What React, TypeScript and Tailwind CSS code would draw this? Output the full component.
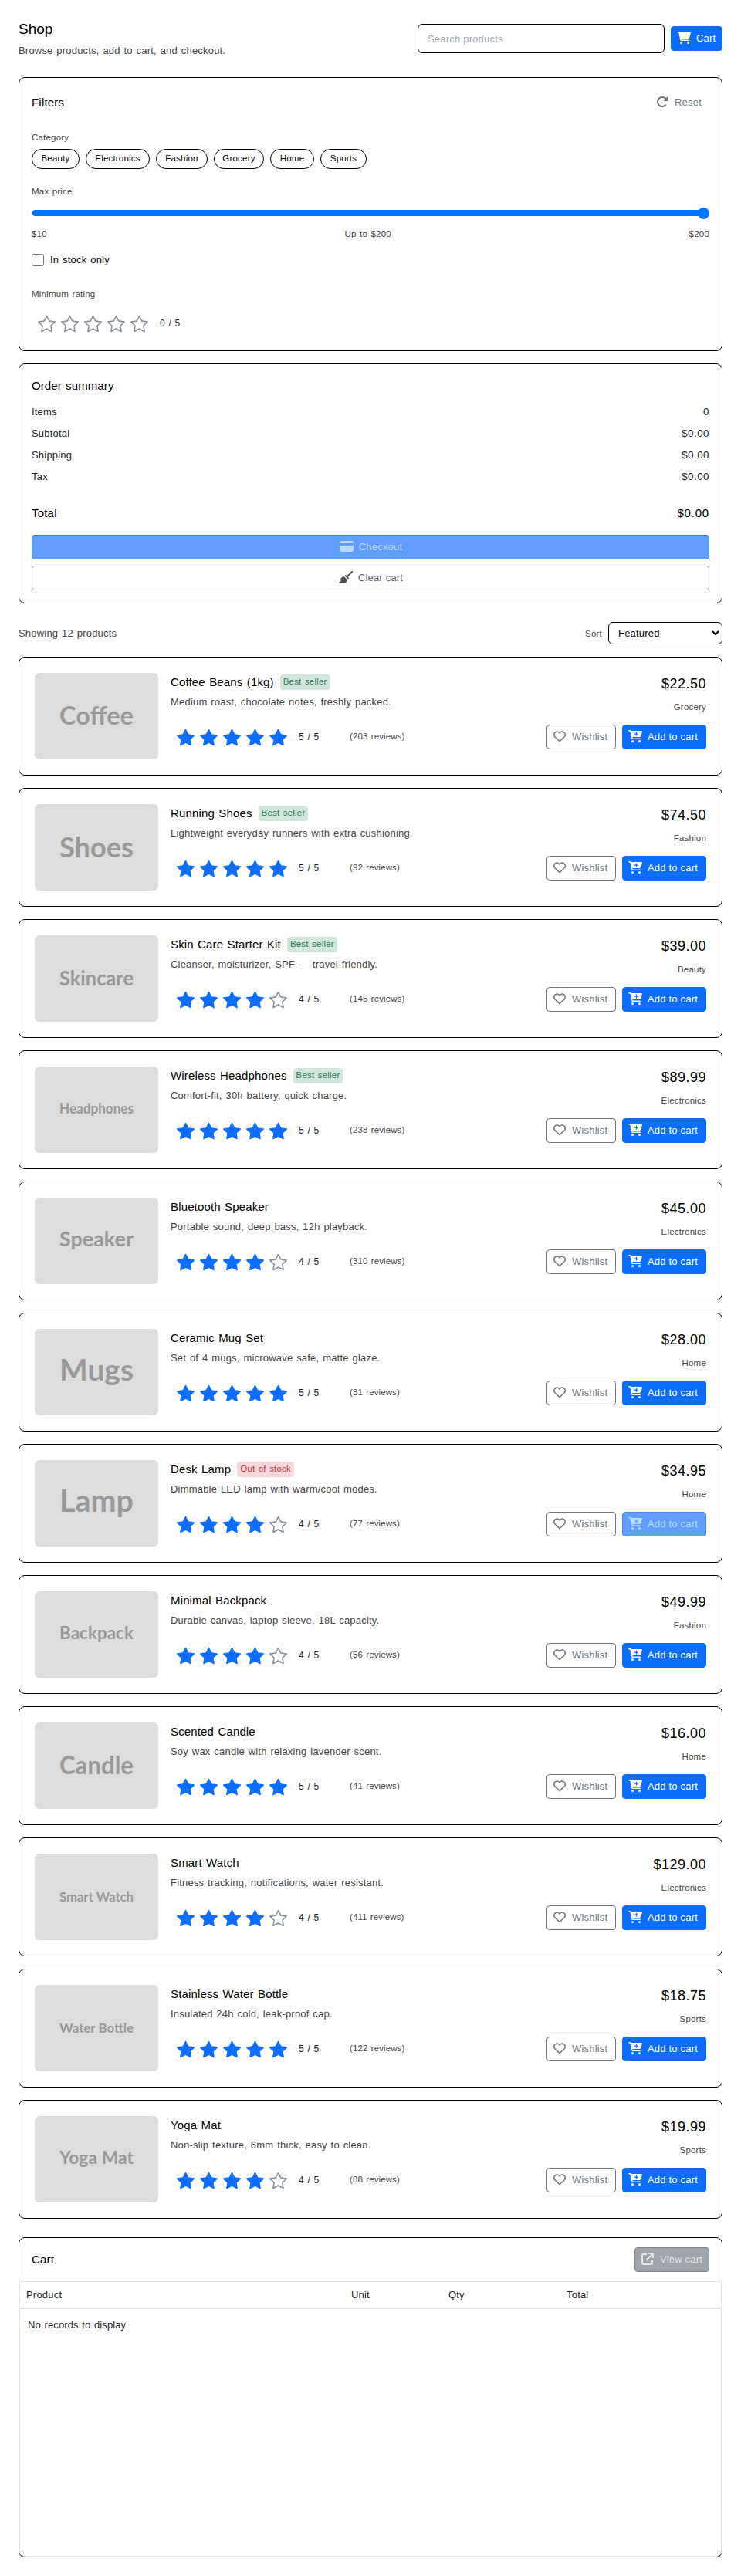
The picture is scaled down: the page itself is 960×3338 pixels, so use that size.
import React from "react";
import { clsx } from "clsx";
import { BsStar, BsStarFill } from "react-icons/bs";
import {
  FaArrowUpRightFromSquare,
  FaBroom,
  FaCartPlus,
  FaCartShopping,
  FaCreditCard,
  FaRegHeart,
  FaRotateRight,
} from "react-icons/fa6";

interface Product {
  name: string;
  description: string;
  image: string;
  imageSize: number;
  rating: number;
  reviews: number;
  price: string;
  category: string;
  bestSeller?: boolean;
  outOfStock?: boolean;
}

const categories = [
  { name: "Beauty", width: "w-[62px]" },
  { name: "Electronics", width: "w-[83px]" },
  { name: "Fashion", width: "w-[67px]" },
  { name: "Grocery", width: "w-[65px]" },
  { name: "Home", width: "w-[57px]" },
  { name: "Sports", width: "w-[60px]" },
];

const products: Product[] = [
  { name: "Coffee Beans (1kg)", description: "Medium roast, chocolate notes, freshly packed.", image: "Coffee", imageSize: 32, rating: 5, reviews: 203, price: "$22.50", category: "Grocery", bestSeller: true },
  { name: "Running Shoes", description: "Lightweight everyday runners with extra cushioning.", image: "Shoes", imageSize: 37, rating: 5, reviews: 92, price: "$74.50", category: "Fashion", bestSeller: true },
  { name: "Skin Care Starter Kit", description: "Cleanser, moisturizer, SPF — travel friendly.", image: "Skincare", imageSize: 26, rating: 4, reviews: 145, price: "$39.00", category: "Beauty", bestSeller: true },
  { name: "Wireless Headphones", description: "Comfort-fit, 30h battery, quick charge.", image: "Headphones", imageSize: 18, rating: 5, reviews: 238, price: "$89.99", category: "Electronics", bestSeller: true },
  { name: "Bluetooth Speaker", description: "Portable sound, deep bass, 12h playback.", image: "Speaker", imageSize: 27.5, rating: 4, reviews: 310, price: "$45.00", category: "Electronics" },
  { name: "Ceramic Mug Set", description: "Set of 4 mugs, microwave safe, matte glaze.", image: "Mugs", imageSize: 39, rating: 5, reviews: 31, price: "$28.00", category: "Home" },
  { name: "Desk Lamp", description: "Dimmable LED lamp with warm/cool modes.", image: "Lamp", imageSize: 40, rating: 4, reviews: 77, price: "$34.95", category: "Home", outOfStock: true },
  { name: "Minimal Backpack", description: "Durable canvas, laptop sleeve, 18L capacity.", image: "Backpack", imageSize: 23, rating: 4, reviews: 56, price: "$49.99", category: "Fashion" },
  { name: "Scented Candle", description: "Soy wax candle with relaxing lavender scent.", image: "Candle", imageSize: 32, rating: 5, reviews: 41, price: "$16.00", category: "Home" },
  { name: "Smart Watch", description: "Fitness tracking, notifications, water resistant.", image: "Smart Watch", imageSize: 17, rating: 4, reviews: 411, price: "$129.00", category: "Electronics" },
  { name: "Stainless Water Bottle", description: "Insulated 24h cold, leak-proof cap.", image: "Water Bottle", imageSize: 17, rating: 5, reviews: 122, price: "$18.75", category: "Sports" },
  { name: "Yoga Mat", description: "Non-slip texture, 6mm thick, easy to clean.", image: "Yoga Mat", imageSize: 23.5, rating: 4, reviews: 88, price: "$19.99", category: "Sports" },
];

const totals = [
  ["Items", "0"],
  ["Subtotal", "$0.00"],
  ["Shipping", "$0.00"],
  ["Tax", "$0.00"],
];

interface ButtonProps {
  icon: React.ReactNode;
  className: string;
  disabled?: boolean;
  children: React.ReactNode;
}

function Button({ icon, className, disabled, children }: ButtonProps) {
  return (
    <button
      type="button"
      disabled={disabled}
      className={clsx("flex h-8 shrink-0 items-center gap-[6px] rounded border px-[6px] whitespace-nowrap", className)}
    >
      <span className="mb-[2px] flex w-5 justify-center">{icon}</span>
      {children}
    </button>
  );
}

function Rating({ value }: { value: number }) {
  return (
    <div className="flex h-6 items-center pl-2">
      <div className="flex gap-[7px]">
        {[1, 2, 3, 4, 5].map((n) =>
          n <= value ? (
            <BsStarFill key={n} size={23} className="text-[#0d6efd]" />
          ) : (
            <BsStar key={n} size={23} className="text-[#868e96]" />
          )
        )}
      </div>
      <span className="ml-[15px] text-xs text-[#212529]">{value} / 5</span>
    </div>
  );
}

function Label({ className, children }: { className?: string; children: React.ReactNode }) {
  return <div className={clsx("h-[18px] text-[11.5px] leading-[18px] text-[#444]", className)}>{children}</div>;
}

function Thumbnail({ text, size }: { text: string; size: number }) {
  // words with a descender sit higher so the ink stays centred
  const shift = /[gpy]/.test(text) ? 0.27 : 0.35;

  return (
    <svg width="160" height="112" className="shrink-0 rounded-md bg-[#ddd]">
      <text
        x="80"
        y={56 + size * shift}
        textAnchor="middle"
        textLength="96"
        lengthAdjust="spacingAndGlyphs"
        fontSize={size}
        className="fill-[#999] font-['Lato',sans-serif] font-bold tracking-normal [word-spacing:0]"
      >
        {text}
      </text>
    </svg>
  );
}

function ProductCard({ product }: { product: Product }) {
  return (
    <article className="flex h-[154px] gap-4 rounded-lg border border-black p-5">
      <Thumbnail text={product.image} size={product.imageSize} />
      <div className="grow">
        <div className="mt-[2px] flex h-5 items-center gap-2">
          <h3 className="text-[15px] tracking-[0.15px] text-black">{product.name}</h3>
          {product.bestSeller && (
            <span className="h-5 rounded-sm bg-[#d1e7dd] px-1 text-[11.5px] leading-[18px] text-[#2c7a54]">Best seller</span>
          )}
          {product.outOfStock && (
            <span className="h-5 rounded-sm bg-[#f8d7da] px-1 text-[11.5px] leading-[18px] text-[#b93a48]">Out of stock</span>
          )}
        </div>
        <p className="mt-[6px] h-5 leading-5 text-[#444]">{product.description}</p>
        <div className="mt-[23px] flex items-center">
          <div className="w-[232px]">
            <Rating value={product.rating} />
          </div>
          <span className="text-[11.5px] tracking-[0.1px] text-[#444]">({product.reviews} reviews)</span>
        </div>
      </div>
      <div className="flex flex-col items-end">
        <div className="h-7 text-[18px] leading-7 tracking-[0.5px] text-black">{product.price}</div>
        <Label className="mt-[7px]">{product.category}</Label>
        <div className="mt-[14px] flex gap-2">
          <Button icon={<FaRegHeart size={16} />} className="w-[90px] border-[#6c757d] text-[#6c757d]">
            Wishlist
          </Button>
          <Button
            icon={<FaCartPlus size={18} />}
            disabled={product.outOfStock}
            className={clsx(
              "w-[109px]",
              product.outOfStock ? "border-[#3f88f0] bg-[#609eff] text-[#bcd8ff]" : "border-[#0d6efd] bg-[#0d6efd] text-white"
            )}
          >
            Add to cart
          </Button>
        </div>
      </div>
    </article>
  );
}

export default function App() {
  return (
    <div className="min-h-[3338px] bg-white p-6 font-['Liberation_Sans',Arial,sans-serif] text-[13px] tracking-[0.2px] text-[#212529] [word-spacing:1px]">
      {/* Page header */}
      <header className="flex h-[52px] items-center justify-between">
        <div className="h-full">
          <h1 className="h-7 text-[19px] leading-7 tracking-normal text-black">Shop</h1>
          <p className="mt-1 h-5 leading-5 text-[#444]">Browse products, add to cart, and checkout.</p>
        </div>
        <div className="flex items-center gap-2">
          <input
            placeholder="Search products"
            className="h-[38px] w-80 rounded-md border border-black px-3 placeholder:text-[#a3a9b0]"
          />
          <Button icon={<FaCartShopping size={18} />} className="w-[67px] border-[#0d6efd] bg-[#0d6efd] text-white">
            Cart
          </Button>
        </div>
      </header>

      {/* Filters */}
      <section className="mt-6 h-[355px] rounded-lg border border-black p-4">
        <div className="flex h-8 items-center justify-between">
          <h2 className="text-[15px] text-black">Filters</h2>
          <Button icon={<FaRotateRight size={16} />} className="w-[78px] border-transparent text-[#6c757d]">
            Reset
          </Button>
        </div>

        <Label className="mt-5">Category</Label>
        <div className="mt-[6px] flex gap-2">
          {categories.map((category) => (
            <button
              key={category.name}
              type="button"
              className={clsx("h-[26px] rounded-full border border-black text-[11.5px] text-black", category.width)}
            >
              {category.name}
            </button>
          ))}
        </div>

        <Label className="mt-5">Max price</Label>
        <div className="mt-[11px] flex h-4 items-center">
          <div className="ml-px h-2 grow rounded-l-full bg-[#0075ff]" />
          <div className="-ml-2 size-[15px] rounded-full bg-[#0075ff]" />
        </div>
        <div className="mt-[10px] flex justify-between">
          <Label>$10</Label>
          <Label>Up to $200</Label>
          <Label>$200</Label>
        </div>

        <label className="mt-[15px] flex h-5 items-center gap-2 text-black">
          <span className="size-4 rounded-[2.5px] border border-[#767676]" />
          In stock only
        </label>

        <Label className="mt-[25px]">Minimum rating</Label>
        <div className="mt-[17px]">
          <Rating value={0} />
        </div>
      </section>

      {/* Order summary */}
      <section className="mt-4 rounded-lg border border-black p-4">
        <h2 className="mb-2 h-6 text-[15px] leading-6 tracking-[0.1px] text-black">Order summary</h2>
        {totals.map(([label, value]) => (
          <div key={label} className="flex h-7 items-center justify-between">
            <span>{label}</span>
            <span className="text-[13.5px] tracking-[0.4px]">{value}</span>
          </div>
        ))}
        <div className="mt-[21px] flex h-6 items-center justify-between text-[15px] text-black">
          <span>Total</span>
          <span className="tracking-[0.8px]">$0.00</span>
        </div>
        <div className="mt-4 flex flex-col gap-2">
          <Button
            icon={<FaCreditCard size={18} />}
            disabled
            className="justify-center border-[#3f80d0] bg-[#609eff] text-[#bcd8ff]"
          >
            Checkout
          </Button>
          <Button icon={<FaBroom size={18} className="text-[#4d5154]" />} className="justify-center border-[#999fa5] text-[#5d656d]">
            Clear cart
          </Button>
        </div>
      </section>

      {/* Product list */}
      <div className="mt-6 flex h-[29px] items-center justify-between">
        <span className="text-[#444]">Showing 12 products</span>
        <div className="flex items-center gap-2">
          <Label>Sort</Label>
          <select className="h-[29px] w-[148px] rounded-md border border-black bg-white pl-2 text-black">
            <option>Featured</option>
          </select>
        </div>
      </div>
      <div className="mt-4 flex flex-col gap-4">
        {products.map((product) => (
          <ProductCard key={product.name} product={product} />
        ))}
      </div>

      {/* Cart */}
      <section className="mt-6 flex h-[415px] flex-col rounded-lg border border-black">
        <div className="flex h-14 items-center justify-between px-4">
          <h2 className="text-[15px] text-black">Cart</h2>
          <Button
            icon={<FaArrowUpRightFromSquare size={16} />}
            disabled
            className="w-[97px] border-[#7f868d] bg-[#9fa5ab] text-[#e4e6e8]"
          >
            View cart
          </Button>
        </div>
        <div className="grow rounded-b-lg border border-[#dee2e6]">
          <div className="flex h-[35px] items-center border-b border-[#dee2e6] pl-2">
            <span className="w-[421px]">Product</span>
            <span className="w-[126px]">Unit</span>
            <span className="w-[153px]">Qty</span>
            <span>Total</span>
          </div>
          <div className="mt-[11px] pl-[10px] leading-5 tracking-[0.1px]">No records to display</div>
        </div>
      </section>
    </div>
  );
}
